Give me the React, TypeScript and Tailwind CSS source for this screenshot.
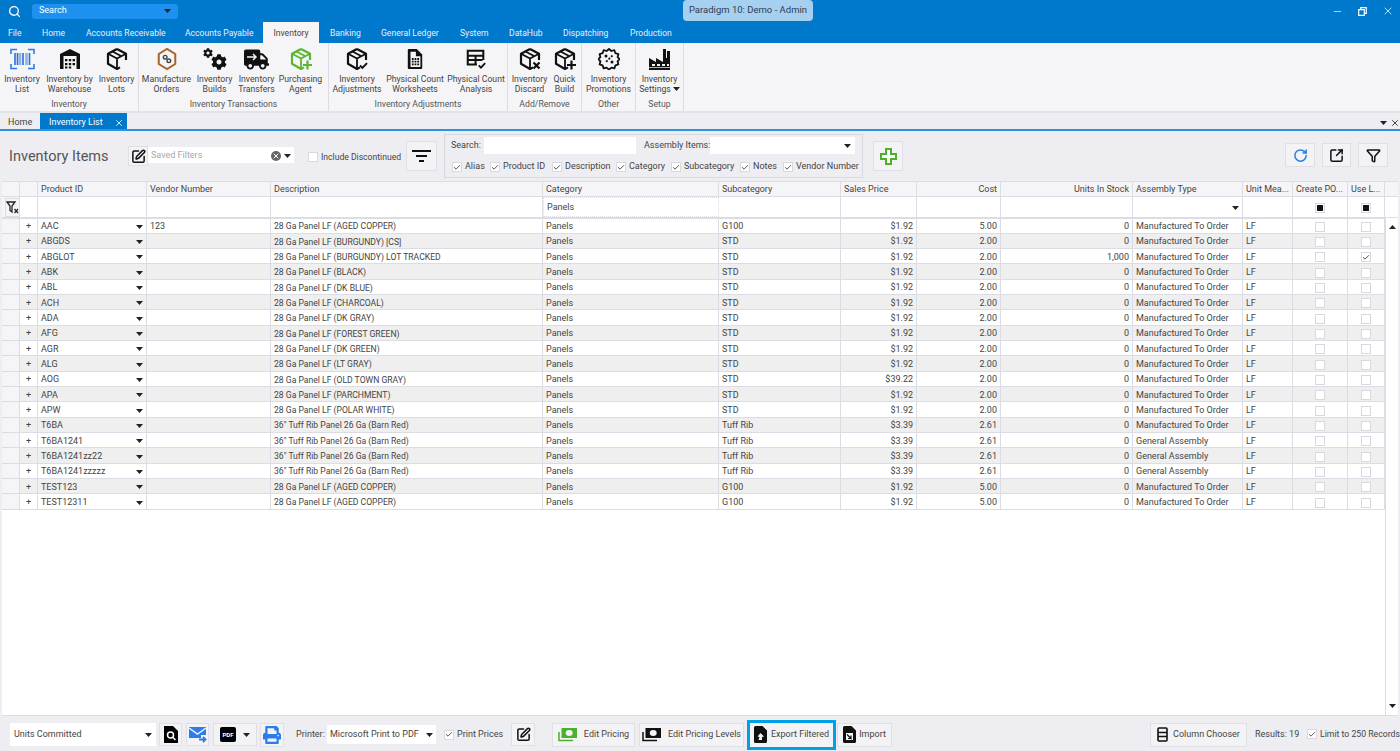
import React from "react";
import { Search, X, Minus, Check, RotateCw, SquareArrowOutUpRight, Funnel, SquarePen } from "lucide-react";
import { FaCog, FaTruck, FaPrint } from "react-icons/fa";

const Caret = ({ className = "" }: { className?: string }) => (
  <svg width="7" height="4" viewBox="0 0 7 4" className={className}><path d="M0 0h7L3.5 4z" fill="#222" /></svg>
);

const Box = ({ badge, color = "#111" }: { badge?: "check" | "x" | "plus"; color?: string }) => (
  <svg width="24" height="24" viewBox="0 0 24 24" fill="none">
    <path d="M12 2 3 6.800v10L12 22l3-1.600M21 13V6.800L12 2" stroke={color} strokeWidth="2.200" strokeLinejoin="round" />
    <path d="M3.500 7 12 11.600 20.500 7M12 11.600V21M7.500 4.500l9 4.800" stroke={color} strokeWidth="1.800" />
    {badge === "check" && <path d="m15 18.500 2.400 2.400 4.600-4.800" stroke={color} strokeWidth="2" />}
    {badge === "x" && <path d="m15.500 15.500 6 6m0-6-6 6" stroke={color} strokeWidth="2.200" />}
    {badge === "plus" && <path d="M18.500 13.500v9m-4.500-4.500h9" stroke={color} strokeWidth="2.200" />}
  </svg>
);

const Barcode = () => (
  <svg width="25" height="22" viewBox="0 0 25 22" fill="none">
    <path d="M1 6V1.500h6M18 1.500h6V6M1 16v4.500h6M18 20.500h6V16" stroke="#2b7de9" strokeWidth="1.600" />
    <path d="M5 5v12M7.500 5v12M13 5v12M19.500 5v12" stroke="#2b6fd6" strokeWidth="1.600" />
    <path d="M10 5v12M16.500 5v12" stroke="#8bb4ea" strokeWidth="2.600" />
  </svg>
);

const WarehouseIcon = () => (
  <svg width="22" height="20" viewBox="0 0 22 20">
    <path d="M11 0 1 5v15h20V5z" fill="#111" />
    <path d="M4.500 7h13v13h-13z" fill="#f5f5f7" />
    <path d="M6 10h2.400v2.200H6zM9.800 10h2.400v2.200H9.800zM13.600 10H16v2.200h-2.400zM6 14h2.400v2.200H6zM9.800 14h2.400v2.200H9.800zM13.600 14H16v2.200h-2.400zM6 17.500h2.400v2H6zM9.800 17.500h2.400v2H9.800z" fill="#111" />
  </svg>
);

const Manufacture = () => (
  <svg width="22" height="24" viewBox="0 0 24 26" fill="none">
    <path d="M12 2 21 7.500v11L12 24l-9-5.500v-11z" stroke="#a8672a" strokeWidth="2.200" />
    <circle cx="10" cy="11" r="2" stroke="#444" strokeWidth="1.500" />
    <circle cx="14" cy="15" r="2" stroke="#444" strokeWidth="1.500" />
  </svg>
);

const Cogs = () => (
  <div className="relative w-[24px] h-[22px]">
    <FaCog size={10} color="#111" className="absolute left-0 top-0" />
    <FaCog size={16} color="#111" className="absolute right-0 bottom-0" />
  </div>
);

const TruckIcon = () => (
  <div className="relative">
    <FaTruck size={25} color="#111" />
    <svg width="12" height="8" viewBox="0 0 12 8" className="absolute left-[2px] top-[6px]" fill="none"><path d="M1 4h9M7 1l3 3-3 3" stroke="#f5f5f7" strokeWidth="1.500" /></svg>
  </div>
);

const PhysicalDoc = () => (
  <svg width="18" height="22" viewBox="0 0 20 24" fill="none">
    <path d="M3 1h9l6 6v15a1 1 0 0 1-1 1H3a1 1 0 0 1-1-1V2a1 1 0 0 1 1-1z" fill="#111" />
    <path d="M5 4h6v5h5v12H5z" fill="#f5f5f7" />
    <path d="M6.500 11h2v2h-2zM9.500 11h2v2h-2zM12.500 11h2v2h-2zM6.500 14h2v2h-2zM9.500 14h2v2h-2zM12.500 14h2v2h-2zM6.500 17h2v2h-2zM9.500 17h2v2h-2zM12.500 17h2v2h-2z" fill="#111" />
  </svg>
);

const TableCheck = () => (
  <svg width="24" height="22" viewBox="0 0 24 24" fill="none">
    <path d="M13 18H3V3h17v10M3 8.500h17M11.500 8.500V18M3 13h16" stroke="#111" strokeWidth="2.200" />
    <path d="m15 19 2.400 2.400 4.600-4.800" stroke="#111" strokeWidth="2" />
  </svg>
);

const Promo = () => (
  <svg width="22" height="22" viewBox="0 0 22 22" fill="none">
    <path d="M11 1l2.400 2 3-.8 1 3 3 1-.8 3 2 1.800-2 2.400.8 3-3 1-1 3-3-.8-2.400 2-2.400-2-3 .8-1-3-3-1 .8-3-2-2.400 2-1.800-.8-3 3-1 1-3 3 .8z" stroke="#111" strokeWidth="1.800" strokeLinejoin="round" />
    <path d="M14.500 7.500l-7 7" stroke="#111" strokeWidth="1.800" strokeDasharray="2 1.500" />
    <circle cx="8" cy="8" r="1.500" fill="#111" /><circle cx="14" cy="14" r="1.500" fill="#111" />
  </svg>
);

const Factory = () => (
  <svg width="24" height="23" viewBox="0 0 24 23">
    <path d="M1 22V10l7 4v-4l7 4V1h3v9h1V3h3v19z" fill="#111" />
    <path d="M4 16h3v2H4zM9 16h3v2H9zM14 16h3v2h-3zM19 16h2v2h-2z" fill="#f5f5f7" />
    <path d="M1 19.500h22" stroke="#f5f5f7" strokeWidth="0.700" />
  </svg>
);

const Ribbon = ({ w, a, b, icon, caret }: { w: string; a: string; b: string; icon: React.ReactNode; caret?: boolean }) => (
  <div className={`flex flex-col items-center ${w}`}>
    <div className="h-[24px] mt-[4px] flex items-center justify-center">{icon}</div>
    <div className="mt-[3px] text-[8.700px] leading-[10px] text-[#444] text-center whitespace-nowrap">
      <div>{a}</div>
      <div className="flex items-center justify-center gap-[2px]">{b}{caret && <Caret />}</div>
    </div>
  </div>
);

const Group = ({ w, label, children }: { w: string; label: string; children: React.ReactNode }) => (
  <div className={`${w} shrink-0 flex flex-col border-r border-[#dcdce2]`}>
    <div className="flex justify-center h-[56px]">{children}</div>
    <div className="text-[8.700px] leading-[10px] text-[#555] text-center">{label}</div>
  </div>
);

const Cb = ({ on }: { on?: boolean }) => (
  <span className="w-[10px] h-[10px] border border-[#d8d8de] bg-white flex items-center justify-center shrink-0">
    {on && <Check size={9} strokeWidth={2.500} color="#333" />}
  </span>
);

const Lab = ({ t, cls }: { t: string; cls: string }) => (
  <span className={`flex items-center gap-[3px] whitespace-nowrap ${cls}`}><Cb on /><span>{t}</span></span>
);

const Btn = ({ cls, children }: { cls: string; children: React.ReactNode }) => (
  <div className={`border border-[#dfdfe6] bg-[#f3f3f6] flex items-center justify-center shrink-0 whitespace-nowrap ${cls}`}>{children}</div>
);

const COLS = "grid grid-cols-[18px_18px_109px_124px_272px_176px_122px_76px_84px_132px_110px_50px_55px_37px]";
const cell = "border-r border-[#dcdce4] px-[3px] pt-[2px] flex items-center overflow-hidden whitespace-nowrap";

type R = [string, string, string, string, string, string, string, string, boolean?];
const D = "Manufactured To Order";
const G = "General Assembly";
const rows: R[] = [
  ["AAC", "123", "28 Ga Panel LF (AGED COPPER)", "G100", "$1.92", "5.00", "0", D],
  ["ABGDS", "", "28 Ga Panel LF (BURGUNDY) [CS]", "STD", "$1.92", "2.00", "0", D],
  ["ABGLOT", "", "28 Ga Panel LF (BURGUNDY) LOT TRACKED", "STD", "$1.92", "2.00", "1,000", D, true],
  ["ABK", "", "28 Ga Panel LF (BLACK)", "STD", "$1.92", "2.00", "0", D],
  ["ABL", "", "28 Ga Panel LF (DK BLUE)", "STD", "$1.92", "2.00", "0", D],
  ["ACH", "", "28 Ga Panel LF (CHARCOAL)", "STD", "$1.92", "2.00", "0", D],
  ["ADA", "", "28 Ga Panel LF (DK GRAY)", "STD", "$1.92", "2.00", "0", D],
  ["AFG", "", "28 Ga Panel LF (FOREST GREEN)", "STD", "$1.92", "2.00", "0", D],
  ["AGR", "", "28 Ga Panel LF (DK GREEN)", "STD", "$1.92", "2.00", "0", D],
  ["ALG", "", "28 Ga Panel LF (LT GRAY)", "STD", "$1.92", "2.00", "0", D],
  ["AOG", "", "28 Ga Panel LF (OLD TOWN GRAY)", "STD", "$39.22", "2.00", "0", D],
  ["APA", "", "28 Ga Panel LF (PARCHMENT)", "STD", "$1.92", "2.00", "0", D],
  ["APW", "", "28 Ga Panel LF (POLAR WHITE)", "STD", "$1.92", "2.00", "0", D],
  ["T6BA", "", '36" Tuff Rib Panel 26 Ga (Barn Red)', "Tuff Rib", "$3.39", "2.61", "0", D],
  ["T6BA1241", "", '36" Tuff Rib Panel 26 Ga (Barn Red)', "Tuff Rib", "$3.39", "2.61", "0", G],
  ["T6BA1241zz22", "", '36" Tuff Rib Panel 26 Ga (Barn Red)', "Tuff Rib", "$3.39", "2.61", "0", G],
  ["T6BA1241zzzzz", "", '36" Tuff Rib Panel 26 Ga (Barn Red)', "Tuff Rib", "$3.39", "2.61", "0", G],
  ["TEST123", "", "28 Ga Panel LF (AGED COPPER)", "G100", "$1.92", "5.00", "0", D],
  ["TEST12311", "", "28 Ga Panel LF (AGED COPPER)", "G100", "$1.92", "5.00", "0", D],
];
const heads: [string, boolean?][] = [["Product ID"], ["Vendor Number"], ["Description"], ["Category"], ["Subcategory"], ["Sales Price"], ["Cost", true], ["Units In Stock", true], ["Assembly Type"], ["Unit Mea..."], ["Create PO..."], ["Use L..."]];

const Money = ({ c }: { c: string }) => (
  <svg width="20" height="15" viewBox="0 0 20 15" fill="none">
    <path d="M1 5v8.500h14" stroke={c} strokeWidth="1.500" />
    <rect x="3.500" y="1" width="15.500" height="10" fill={c} />
    <ellipse cx="11.200" cy="6" rx="3.500" ry="3" fill="#f3f3f6" />
  </svg>
);

const FileIcon = ({ inner }: { inner: "star" | "in" }) => (
  <svg width="13" height="17" viewBox="0 0 13 17">
    <path d="M1.500 0H8.500L13 4.500V15.500a1.500 1.500 0 0 1-1.500 1.500h-10A1.500 1.500 0 0 1 0 15.500V1.500A1.500 1.500 0 0 1 1.500 0z" fill="#111" />
    {inner === "star" ? <path d="M6.500 7 10 10.500l-2 .5v3H4.500l1-3-2-.5z" fill="#f3f3f6" /> : <path d="M3 7h7v7H3z" fill="#f3f3f6" />}
    {inner === "in" && <path d="M4 8.500 8 12.500V9.500M8 12.500H5" stroke="#111" strokeWidth="1.200" fill="none" />}
  </svg>
);

export default function App() {
  return (
    <div className="w-[1400px] h-[751px] overflow-hidden flex flex-col bg-[#eeeef2] font-['Roboto','Noto_Sans',sans-serif] text-[9px] text-[#444]">
      {/* Title bar */}
      <div className="h-[22px] bg-[#0078cc] relative flex items-center shrink-0">
        <Search size={13} color="#fff" strokeWidth={2.500} className="ml-[8px]" />
        <div className="ml-[11px] w-[146px] h-[15px] rounded-[3px] bg-[#1e90f0] flex items-center justify-between px-[7px] text-white">
          <span>Search</span><Caret />
        </div>
        <div className="absolute left-[683px] top-0 w-[130px] h-[21px] rounded-[4px] bg-[#a6d0f0] flex items-center justify-center text-[#2c3e50] text-[9.500px]">Paradigm 10: Demo - Admin</div>
        <div className="ml-auto flex items-center gap-[15px] mr-[6px] text-white">
          <Minus size={11} strokeWidth={1.500} />
          <svg width="9" height="9" viewBox="0 0 9 9" fill="none"><path d="M.7 2.700h5.600v5.600H.7zM2.700 2.500V.7h5.600v5.600H6.500" stroke="#fff" strokeWidth="1.200" /></svg>
          <X size={12} strokeWidth={1.500} />
        </div>
      </div>
      {/* Tabs */}
      <div className="h-[21px] bg-[#0078cc] flex items-end pl-[8px] shrink-0 text-[#e4f1fb] text-[8.600px] leading-[23px] whitespace-nowrap">
        <span className="h-[21px] w-[34px]">File</span>
        <span className="h-[21px] w-[44px]">Home</span>
        <span className="h-[21px] w-[99px]">Accounts Receivable</span>
        <span className="h-[21px] w-[78px]">Accounts Payable</span>
        <span className="h-[21px] w-[56px] bg-[#f5f5f7] text-[#444] text-center">Inventory</span>
        <span className="h-[21px] w-[62px] pl-[11px]">Banking</span>
        <span className="h-[21px] w-[79px]">General Ledger</span>
        <span className="h-[21px] w-[49px]">System</span>
        <span className="h-[21px] w-[54px]">DataHub</span>
        <span className="h-[21px] w-[67px]">Dispatching</span>
        <span className="h-[21px]">Production</span>
      </div>
      {/* Ribbon */}
      <div className="h-[70px] bg-[#f5f5f7] flex border-b-2 border-[#e2e2e8] shrink-0">
        <Group w="w-[139px]" label="Inventory">
          <Ribbon w="w-[41px]" a="Inventory" b="List" icon={<Barcode />} />
          <Ribbon w="w-[54px]" a="Inventory by" b="Warehouse" icon={<WarehouseIcon />} />
          <Ribbon w="w-[40px]" a="Inventory" b="Lots" icon={<Box />} />
        </Group>
        <Group w="w-[190px]" label="Inventory Transactions">
          <Ribbon w="w-[50px]" a="Manufacture" b="Orders" icon={<Manufacture />} />
          <Ribbon w="w-[46px]" a="Inventory" b="Builds" icon={<Cogs />} />
          <Ribbon w="w-[38px]" a="Inventory" b="Transfers" icon={<TruckIcon />} />
          <Ribbon w="w-[50px]" a="Purchasing" b="Agent" icon={<Box badge="plus" color="#5cb531" />} />
        </Group>
        <Group w="w-[179px]" label="Inventory Adjustments">
          <Ribbon w="w-[50px]" a="Inventory" b="Adjustments" icon={<Box badge="check" />} />
          <Ribbon w="w-[66px]" a="Physical Count" b="Worksheets" icon={<PhysicalDoc />} />
          <Ribbon w="w-[56px]" a="Physical Count" b="Analysis" icon={<TableCheck />} />
        </Group>
        <Group w="w-[74px]" label="Add/Remove">
          <Ribbon w="w-[40px]" a="Inventory" b="Discard" icon={<Box badge="x" />} />
          <Ribbon w="w-[30px]" a="Quick" b="Build" icon={<Box badge="plus" />} />
        </Group>
        <Group w="w-[54px]" label="Other">
          <Ribbon w="w-[54px]" a="Inventory" b="Promotions" icon={<Promo />} />
        </Group>
        <Group w="w-[48px]" label="Setup">
          <Ribbon w="w-[48px]" a="Inventory" b="Settings" caret icon={<Factory />} />
        </Group>
      </div>
      {/* Doc tabs */}
      <div className="h-[18px] flex items-stretch shrink-0 border-b-2 border-[#2a94e0] bg-[#eeeef2]">
        <div className="w-[40px] pl-[8px] pt-[3px] flex items-center">Home</div>
        <div className="w-[87px] bg-[#0078cc] text-white flex items-center justify-between pl-[9px] pr-[3px] pt-[3px]">
          <span>Inventory List</span><X size={10} color="#fff" strokeWidth={2} />
        </div>
        <div className="ml-auto flex items-center gap-[3px] pt-[3px]">
          <Caret /><X size={10} color="#222" strokeWidth={2} />
        </div>
      </div>
      {/* Toolbar */}
      <div className="h-[50px] shrink-0 flex items-start">
        <div className="ml-[9px] w-[119px] mt-[15px] text-[14.500px] leading-[22px] text-[#555]">Inventory Items</div>
        <Btn cls="w-[20px] h-[20px] mt-[15px]"><SquarePen size={15} color="#111" strokeWidth={2.400} /></Btn>
        <div className="mt-[16px] w-[146px] h-[16px] bg-white flex items-center px-[3px] pt-[2px] text-[#a8a8a8]">
          <span>Saved Filters</span>
          <span className="ml-auto w-[10px] h-[10px] rounded-full bg-[#666] flex items-center justify-center"><X size={8} color="#fff" strokeWidth={3} /></span>
          <Caret className="ml-[3px]" />
        </div>
        <div className="ml-[14px] mt-[20px] w-[98px] flex items-center gap-[3px] whitespace-nowrap text-[8.600px]">
          <Cb /><span>Include Discontinued</span>
        </div>
        <Btn cls="mt-[10px] w-[31px] h-[30px]">
          <svg width="19" height="12" viewBox="0 0 19 12"><path d="M0 0h19v2H0zM4 5h11v2H4zM7 10h5v2H7z" fill="#111" /></svg>
        </Btn>
        <div className="ml-[7px] mt-[3px] w-[419px] h-[44px] border border-[#d8d8de] flex flex-col whitespace-nowrap">
          <div className="flex items-center h-[19px] mt-[1px]">
            <span className="ml-[6px] w-[33px]">Search:</span>
            <div className="w-[152px] h-[17px] bg-white" />
            <span className="ml-[8px] w-[66px]">Assembly Items:</span>
            <div className="w-[145px] h-[17px] bg-white flex items-center justify-end pr-[4px]"><Caret /></div>
          </div>
          <div className="flex items-center mt-[4px] pl-[7px] h-[16px]">
            <Lab t="Alias" cls="w-[38px]" />
            <Lab t="Product ID" cls="w-[62px]" />
            <Lab t="Description" cls="w-[64px]" />
            <Lab t="Category" cls="w-[55px]" />
            <Lab t="Subcategory" cls="w-[69px]" />
            <Lab t="Notes" cls="w-[43px]" />
            <Lab t="Vendor Number" cls="" />
          </div>
        </div>
        <Btn cls="ml-[10px] mt-[10px] w-[30px] h-[30px]">
          <svg width="17" height="17" viewBox="0 0 17 17"><path d="M6 1h5v5h5v5h-5v5H6v-5H1V6h5z" fill="#fff" stroke="#4caf2e" strokeWidth="2" /></svg>
        </Btn>
        <div className="ml-auto mr-[12px] mt-[12px] flex gap-[7px]">
          <Btn cls="w-[30px] h-[24px]"><RotateCw size={15} color="#2b7de9" strokeWidth={2.400} /></Btn>
          <Btn cls="w-[29px] h-[24px]"><SquareArrowOutUpRight size={15} color="#111" strokeWidth={2.400} /></Btn>
          <Btn cls="w-[30px] h-[24px]"><Funnel size={15} color="#111" strokeWidth={2.400} /></Btn>
        </div>
      </div>
      {/* Grid */}
      <div className="mx-[2px] w-[1396px] h-[535px] shrink-0 bg-white border-b border-[#dcdce4] relative overflow-hidden">
        <div className={`${COLS} h-[16px] bg-[#f5f5f7] border-y border-[#dcdce4]`}>
          <div className={cell} /><div className={cell} />
          {heads.map(([h, right]) => (
            <div key={h} className={`${cell} ${right ? "justify-end" : ""}`}>{h}</div>
          ))}
        </div>
        <div className={`${COLS} h-[21.500px] border-b-2 border-[#dcdce4]`}>
          <div className={`${cell} px-0 pt-0 bg-[#f5f5f7]`}>
            <div className="w-[17px] h-[19px] border border-[#dcdce4] flex items-center justify-center">
              <svg width="13" height="13" viewBox="0 0 13 13" fill="none"><path d="M1 1h8L6 5v6L4 9.500V5z" stroke="#222" strokeWidth="1.300" /><path d="m8.500 8 3.500 4m0-4-3.500 4" stroke="#222" strokeWidth="1.200" /></svg>
            </div>
          </div>
          <div className={cell} /><div className={cell} /><div className={cell} /><div className={cell} />
          <div className={`${cell} border border-dotted border-[#4d9fe0]`}>Panels</div>
          <div className={cell} /><div className={cell} /><div className={cell} /><div className={cell} />
          <div className={`${cell} justify-end`}><Caret /></div>
          <div className={cell} />
          <div className={`${cell} justify-center`}><span className="w-[10px] h-[10px] border border-[#d8d8de] flex items-center justify-center"><span className="w-[6px] h-[6px] bg-[#111]" /></span></div>
          <div className={`${cell} justify-center`}><span className="w-[10px] h-[10px] border border-[#d8d8de] flex items-center justify-center"><span className="w-[6px] h-[6px] bg-[#111]" /></span></div>
        </div>
        {rows.map((r, i) => (
          <div key={r[0]} className={`${COLS} h-[15.330px] border-b border-[#dcdce4] ${i % 2 ? "bg-[#efefef]" : "bg-white"}`}>
            <div className={`${cell} bg-[#f5f5f7]`} />
            <div className={`${cell} justify-center`}>+</div>
            <div className={`${cell} justify-between`}><span>{r[0]}</span><Caret /></div>
            <div className={cell}>{r[1]}</div>
            <div className={`${cell} text-[8.600px]`}>{r[2]}</div>
            <div className={cell}>Panels</div>
            <div className={cell}>{r[3]}</div>
            <div className={`${cell} justify-end`}>{r[4]}</div>
            <div className={`${cell} justify-end`}>{r[5]}</div>
            <div className={`${cell} justify-end`}>{r[6]}</div>
            <div className={cell}>{r[7]}</div>
            <div className={cell}>LF</div>
            <div className={`${cell} justify-center`}><Cb /></div>
            <div className={`${cell} justify-center`}><Cb on={r[8]} /></div>
          </div>
        ))}
        <div className="absolute left-[1383px] top-[37px] bottom-0 w-[13px] bg-white border-l border-[#dcdce4] flex flex-col items-center justify-between py-[7px]">
          <Caret className="rotate-180" /><Caret />
        </div>
      </div>
      {/* Footer */}
      <div className="flex-1 flex items-center relative whitespace-nowrap pt-[2px]">
        <div className="ml-[10px] w-[146px] h-[23px] bg-white flex items-center justify-between px-[4px]">
          <span>Units Committed</span><Caret />
        </div>
        <Btn cls="ml-[3px] w-[23px] h-[23px]">
          <svg width="15" height="17" viewBox="0 0 15 17"><path d="M1 0h9l5 5v12H1z" fill="#000" /><circle cx="7.500" cy="9" r="3" fill="none" stroke="#fff" strokeWidth="1.500" /><path d="m10 11.500 2.500 2.500" stroke="#fff" strokeWidth="1.500" /></svg>
        </Btn>
        <Btn cls="ml-[4px] w-[23px] h-[23px]">
          <svg width="19" height="17" viewBox="0 0 19 17"><path d="M1 1h17v8h-5v3H1z" fill="#2b7de9" /><path d="m1 2 8.500 6L18 2" stroke="#f3f3f6" strokeWidth="1.500" fill="none" /><path d="M11 13.500h6M15 11l2.500 2.500L15 16" stroke="#2b7de9" strokeWidth="1.800" fill="none" /></svg>
        </Btn>
        <Btn cls="ml-[4px] w-[44px] h-[23px] gap-[7px]">
          <span className="w-[16px] h-[15px] rounded-[2px] bg-black text-white text-[6px] font-bold flex items-center justify-center leading-none">PDF</span>
          <Caret />
        </Btn>
        <Btn cls="ml-[3px] w-[24px] h-[24px]"><FaPrint size={18} color="#2b7de9" /></Btn>
        <span className="ml-[12px] w-[31px]">Printer:</span>
        <div className="w-[109px] h-[19px] bg-white flex items-center justify-between px-[3px]"><span>Microsoft Print to PDF</span><Caret /></div>
        <span className="ml-[8px] flex items-center gap-[3px] w-[64px]"><Cb on /><span>Print Prices</span></span>
        <Btn cls="ml-[3px] w-[24px] h-[23px]"><SquarePen size={15} color="#111" strokeWidth={2.400} /></Btn>
        <Btn cls="ml-[17px] w-[83px] h-[24px] gap-[6px]"><Money c="#4caf2e" /><span>Edit Pricing</span></Btn>
        <Btn cls="ml-[4px] w-[105px] h-[24px] gap-[6px]"><Money c="#111" /><span>Edit Pricing Levels</span></Btn>
        <div className="ml-[3px] w-[89px] h-[30px] border-[3px] border-[#00a0e6] bg-[#f3f3f6] flex items-center justify-center gap-[4px] shrink-0"><FileIcon inner="star" /><span>Export Filtered</span></div>
        <Btn cls="ml-px w-[55px] h-[24px] gap-[3px]"><FileIcon inner="in" /><span>Import</span></Btn>
        <Btn cls="ml-auto w-[97px] h-[24px] gap-[5px]">
          <svg width="11" height="15" viewBox="0 0 11 15" fill="none"><rect x="1" y="1" width="9" height="13" rx="1" stroke="#111" strokeWidth="1.600" /><path d="M1 5.500h9M1 9.500h9" stroke="#111" strokeWidth="1.600" /></svg>
          <span>Column Chooser</span>
        </Btn>
        <span className="ml-[8px] w-[52px]">Results: 19</span>
        <span className="flex items-center gap-[3px] w-[93px] text-[8.700px]"><Cb on /><span>Limit to 250 Records</span></span>
      </div>
    </div>
  );
}
